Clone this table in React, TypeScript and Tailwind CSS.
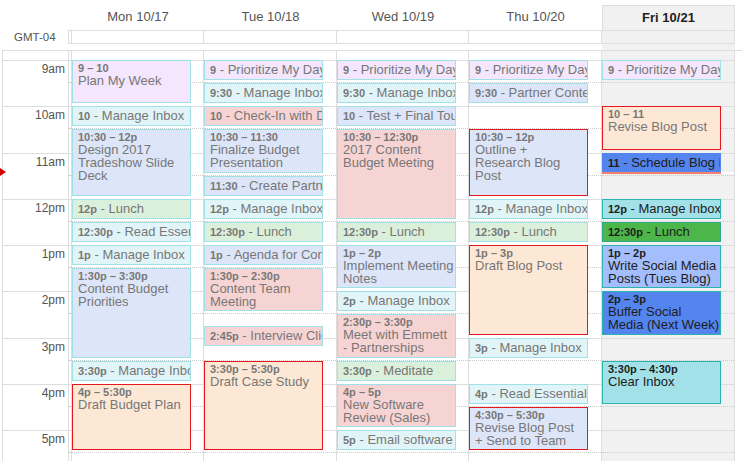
import React from "react";

const HOUR = 46.25;

const tones = {
  lav: "bg-[#f3e6fd] border-[#9fe1e7] text-[#777]",
  cyan: "bg-[#e1f5f8] border-[#9fe1e7] text-[#777]",
  blue: "bg-[#dde5f9] border-[#9fe1e7] text-[#777]",
  pink: "bg-[#f7d4d4] border-[#9fe1e7] text-[#777]",
  green: "bg-[#dbf0da] border-[#9fe1e7] text-[#777]",
  peach: "bg-[#fde8d5] border-[#e3191f] text-[#777]",
  blueRed: "bg-[#dde5f9] border-[#e3191f] text-[#777]",
  fBlue: "bg-[#5484ed] border-[#5484ed] text-[#1d1d1d]",
  fCyan: "bg-[#a2e1e8] border-[#2bb3ad] text-[#1d1d1d]",
  fGreen: "bg-[#4cb64a] border-[#2bab8a] text-[#1d1d1d]",
  fLight: "bg-[#a4bdfc] border-[#2bb3ad] text-[#1d1d1d]",
  fBuffer: "bg-[#5484ed] border-[#2bb3ad] text-[#1d1d1d]",
};

type Tone = keyof typeof tones;
type Ev = [number, number, string, string | string[], Tone];

const days: { label: string; width: string; today?: boolean; events: Ev[] }[] = [
  {
    label: "Mon 10/17",
    width: "w-[132px]",
    events: [
      [9, 10, "9 – 10", ["Plan My Week"], "lav"],
      [10, 10.5, "10", "Manage Inbox", "cyan"],
      [10.5, 12, "10:30 – 12p", ["Design 2017", "Tradeshow Slide", "Deck"], "blue"],
      [12, 12.5, "12p", "Lunch", "green"],
      [12.5, 13, "12:30p", "Read Essentials", "cyan"],
      [13, 13.5, "1p", "Manage Inbox", "cyan"],
      [13.5, 15.5, "1:30p – 3:30p", ["Content Budget", "Priorities"], "blue"],
      [15.5, 16, "3:30p", "Manage Inbox", "cyan"],
      [16, 17.5, "4p – 5:30p", ["Draft Budget Plan"], "peach"],
    ],
  },
  {
    label: "Tue 10/18",
    width: "w-[133px]",
    events: [
      [9, 9.5, "9", "Prioritize My Day", "lav"],
      [9.5, 10, "9:30", "Manage Inbox", "cyan"],
      [10, 10.5, "10", "Check-In with Dave", "pink"],
      [10.5, 11.5, "10:30 – 11:30", ["Finalize Budget", "Presentation"], "blue"],
      [11.5, 12, "11:30", "Create Partner Deck", "blue"],
      [12, 12.5, "12p", "Manage Inbox", "cyan"],
      [12.5, 13, "12:30p", "Lunch", "green"],
      [13, 13.5, "1p", "Agenda for Content Meeting", "blue"],
      [13.5, 14.5, "1:30p – 2:30p", ["Content Team", "Meeting"], "pink"],
      [14.75, 15.25, "2:45p", "Interview Client", "pink"],
      [15.5, 17.5, "3:30p – 5:30p", ["Draft Case Study"], "peach"],
    ],
  },
  {
    label: "Wed 10/19",
    width: "w-[132px]",
    events: [
      [9, 9.5, "9", "Prioritize My Day", "lav"],
      [9.5, 10, "9:30", "Manage Inbox", "cyan"],
      [10, 10.5, "10", "Test + Final Tour", "blue"],
      [10.5, 12.5, "10:30 – 12:30p", ["2017 Content", "Budget Meeting"], "pink"],
      [12.5, 13, "12:30p", "Lunch", "green"],
      [13, 14, "1p – 2p", ["Implement Meeting", "Notes"], "blue"],
      [14, 14.5, "2p", "Manage Inbox", "cyan"],
      [14.5, 15.5, "2:30p – 3:30p", ["Meet with Emmett", "- Partnerships"], "pink"],
      [15.5, 16, "3:30p", "Meditate", "green"],
      [16, 17, "4p – 5p", ["New Software", "Review (Sales)"], "pink"],
      [17, 17.5, "5p", "Email software", "cyan"],
    ],
  },
  {
    label: "Thu 10/20",
    width: "w-[133px]",
    events: [
      [9, 9.5, "9", "Prioritize My Day", "lav"],
      [9.5, 10, "9:30", "Partner Content", "blue"],
      [10.5, 12, "10:30 – 12p", ["Outline +", "Research Blog", "Post"], "blueRed"],
      [12, 12.5, "12p", "Manage Inbox", "cyan"],
      [12.5, 13, "12:30p", "Lunch", "green"],
      [13, 15, "1p – 3p", ["Draft Blog Post"], "peach"],
      [15, 15.5, "3p", "Manage Inbox", "cyan"],
      [16, 16.5, "4p", "Read Essentials", "cyan"],
      [16.5, 17.5, "4:30p – 5:30p", ["Revise Blog Post", "+ Send to Team"], "blueRed"],
    ],
  },
  {
    label: "Fri 10/21",
    width: "w-[133px]",
    today: true,
    events: [
      [9, 9.5, "9", "Prioritize My Day", "lav"],
      [10, 11, "10 – 11", ["Revise Blog Post"], "peach"],
      [11, 11.5, "11", "Schedule Blog Post", "fBlue"],
      [12, 12.5, "12p", "Manage Inbox", "fCyan"],
      [12.5, 13, "12:30p", "Lunch", "fGreen"],
      [13, 14, "1p – 2p", ["Write Social Media", "Posts (Tues Blog)"], "fLight"],
      [14, 15, "2p – 3p", ["Buffer Social", "Media (Next Week)"], "fBuffer"],
      [15.5, 16.5, "3:30p – 4:30p", ["Clear Inbox"], "fCyan"],
    ],
  },
];

const hours = ["9am", "10am", "11am", "12pm", "1pm", "2pm", "3pm", "4pm", "5pm"];
const NOW = 11.43;

function HourRow({ children }: { children?: React.ReactNode }) {
  return (
    <div className="h-[46.25px] border-t border-[#ddd]">
      <div className="h-[22px] border-b border-dotted border-[#ccc]" />
      {children}
    </div>
  );
}

function EventBox({ ev }: { ev: Ev }) {
  const [s, e, time, title, tone] = ev;
  return (
    <div
      className={`absolute left-0 w-[119px] overflow-hidden whitespace-nowrap border pl-[5px] pr-[3px] pt-[1px] ${tones[tone]}`}
      style={{ top: (s - 9) * HOUR, height: (e - s) * HOUR - 3 }}
    >
      {Array.isArray(title) ? (
        <>
          <div className="text-[11px] font-bold leading-[12px]">{time}</div>
          {title.map((t) => (
            <div key={t} className="text-[13px] leading-[13px]">
              {t}
            </div>
          ))}
        </>
      ) : (
        <div className="text-[13px] leading-[15px]">
          <span className="text-[11px] font-bold">{time}</span> - {title}
        </div>
      )}
    </div>
  );
}

export default function App() {
  return (
    <div className="relative h-[461px] w-[742px] overflow-hidden bg-white font-['Liberation_Sans',Arial,sans-serif]">
      {/* day names */}
      <div className="flex h-[30px]">
        <div className="w-[72px] shrink-0" />
        {days.map((d) =>
          d.today ? (
            <div
              key={d.label}
              className={`${d.width} mt-[5px] flex shrink-0 items-center justify-center border-x border-t border-[#ddd] bg-[#f1f1f1] pb-[1px] text-[13px] font-bold text-[#222]`}
            >
              {d.label}
            </div>
          ) : (
            <div
              key={d.label}
              className={`${d.width} flex shrink-0 items-center justify-center pt-[4px] text-[13px] text-[#555]`}
            >
              {d.label}
            </div>
          )
        )}
      </div>

      {/* all-day row */}
      <div className="flex h-[14px]">
        <div className="w-[68px] shrink-0 pl-[14px] text-[11.5px] leading-[14px] text-[#555]">GMT-04</div>
        <div className="w-[4px] shrink-0 border border-[#ddd]" />
        {days.map((d) => (
          <div
            key={d.label}
            className={`${d.width} shrink-0 border-y border-r border-[#ddd] ${d.today ? "bg-[#f1f1f1]" : ""}`}
          />
        ))}
      </div>

      {/* gap */}
      <div className="flex h-[6px]">
        <div className="w-[72px] shrink-0" />
        {days.map((d) => (
          <div key={d.label} className={`${d.width} shrink-0 ${d.today ? "bg-[#f1f1f1]" : ""}`} />
        ))}
      </div>

      {/* time grid */}
      <div className="ml-[2px] flex border-l border-t border-[#ddd]">
        <div className="w-[65px] shrink-0">
          <div className="h-[9px]" />
          {hours.map((h) => (
            <div
              key={h}
              className="h-[46.25px] border-t border-[#ddd] pr-[3px] pt-[1px] text-right text-[12px] leading-[14px] text-[#555]"
            >
              {h}
            </div>
          ))}
        </div>
        <div className="w-[4px] shrink-0 border-x border-[#ddd]">
          <div className="h-[9px]" />
          {hours.map((h) => (
            <HourRow key={h} />
          ))}
        </div>
        {days.map((d) => (
          <div
            key={d.label}
            className={`${d.width} shrink-0 border-r border-[#ddd] ${d.today ? "bg-[#f1f1f1]" : ""}`}
          >
            <div className="h-[9px]" />
            <div className="relative">
              {hours.map((h) => (
                <HourRow key={h} />
              ))}
              {d.events.map((ev) => (
                <EventBox key={ev[2] + ev[0]} ev={ev} />
              ))}
              {d.today && (
                <div className="absolute left-0 flex h-[2px] w-[132px]" style={{ top: (NOW - 9) * HOUR }}>
                  <div className="w-[119px] bg-[#f2826f]" />
                  <div className="flex-1 bg-white" />
                </div>
              )}
            </div>
          </div>
        ))}
      </div>

      {/* current time marker */}
      <div className="absolute left-0 top-[168px] h-0 w-0 border-y-[4px] border-l-[6px] border-y-transparent border-l-[#d50000]" />
    </div>
  );
}
